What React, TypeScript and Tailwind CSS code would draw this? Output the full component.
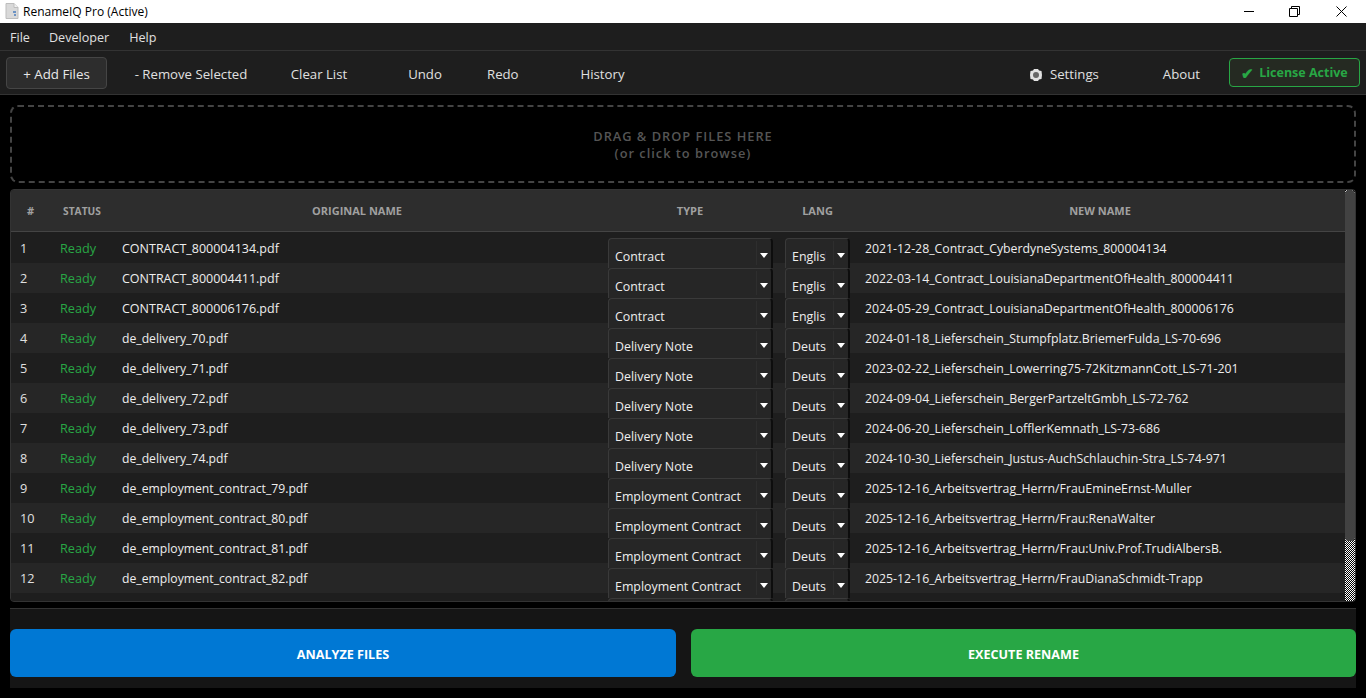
const rows = [
  ["CONTRACT_800004134.pdf", "Contract", "English", "2021-12-28_Contract_CyberdyneSystems_800004134"],
  ["CONTRACT_800004411.pdf", "Contract", "English", "2022-03-14_Contract_LouisianaDepartmentOfHealth_800004411"],
  ["CONTRACT_800006176.pdf", "Contract", "English", "2024-05-29_Contract_LouisianaDepartmentOfHealth_800006176"],
  ["de_delivery_70.pdf", "Delivery Note", "Deutsch", "2024-01-18_Lieferschein_Stumpfplatz.BriemerFulda_LS-70-696"],
  ["de_delivery_71.pdf", "Delivery Note", "Deutsch", "2023-02-22_Lieferschein_Lowerring75-72KitzmannCott_LS-71-201"],
  ["de_delivery_72.pdf", "Delivery Note", "Deutsch", "2024-09-04_Lieferschein_BergerPartzeltGmbh_LS-72-762"],
  ["de_delivery_73.pdf", "Delivery Note", "Deutsch", "2024-06-20_Lieferschein_LofflerKemnath_LS-73-686"],
  ["de_delivery_74.pdf", "Delivery Note", "Deutsch", "2024-10-30_Lieferschein_Justus-AuchSchlauchin-Stra_LS-74-971"],
  ["de_employment_contract_79.pdf", "Employment Contract", "Deutsch", "2025-12-16_Arbeitsvertrag_Herrn/FrauEmineErnst-Muller"],
  ["de_employment_contract_80.pdf", "Employment Contract", "Deutsch", "2025-12-16_Arbeitsvertrag_Herrn/Frau:RenaWalter"],
  ["de_employment_contract_81.pdf", "Employment Contract", "Deutsch", "2025-12-16_Arbeitsvertrag_Herrn/Frau:Univ.Prof.TrudiAlbersB."],
  ["de_employment_contract_82.pdf", "Employment Contract", "Deutsch", "2025-12-16_Arbeitsvertrag_Herrn/FrauDianaSchmidt-Trapp"],
];

const Combo = ({ label, width }: { label: string; width: string }) => (
  <div className={`${width} h-[30px] mt-[5px] flex shrink-0 bg-[#262626] border border-[#3a3a3a] border-r-[#0d0d0d] border-r-2 border-b-0 rounded-t-[4px] overflow-hidden`}>
    <div className="flex-1 min-w-0 ml-[6px] mr-[7px] pt-[9px] text-[12.4px] leading-[18px] text-[#eeeeee] whitespace-nowrap overflow-hidden">{label}</div>
    <div className="w-[15px] h-[24px] mt-[2px] shrink-0 border-l border-[#2e2e2e] flex items-start justify-center pt-[12px]">
      <div className="w-0 h-0 border-x-[4px] border-x-transparent border-t-[5px] border-t-white" />
    </div>
  </div>
);

const ToolButton = ({ label, width }: { label: string; width: string }) => (
  <button className={`${width} h-[32px] pt-[4px] text-[13.2px] text-[#e0e0e0] text-center whitespace-nowrap`}>{label}</button>
);

export default function App() {
  return (
    <div className="w-[1366px] h-[698px] overflow-hidden bg-black flex flex-col font-['Open_Sans',sans-serif] text-[13px]">
      {/* title bar */}
      <div className="h-[23px] bg-white flex items-center shrink-0 pl-[5px]">
        <svg width="14" height="16" viewBox="0 0 14 16" className="mb-[1px]">
          <path d="M1 0.5H9L13 4.5V15.5H1Z" fill="#d9d9d9" stroke="#bdbdbd" />
          <path d="M9 .5V4.5H13" fill="#f2f2f2" stroke="#bdbdbd" />
          <rect x="8" y="8" width="3" height="2" fill="#6c93c4" />
          <rect x="9" y="11" width="2" height="2" fill="#6c93c4" />
        </svg>
        <span className="ml-[4px] text-[12px] text-black">RenameIQ Pro (Active)</span>
        <div className="ml-auto flex items-center h-full pr-[2px]">
          <div className="w-[46px] flex justify-center"><div className="w-[10px] h-px bg-black" /></div>
          <div className="w-[46px] flex justify-center">
            <svg width="11" height="11" viewBox="0 0 11 11" fill="none" stroke="black" className="mr-[2px]">
              <path d="M.5 2.5H8.5V10.5H.5Z" />
              <path d="M2.500 2.500V.5H10.500V8.500H8.500" />
            </svg>
          </div>
          <div className="w-[46px] flex justify-center">
            <svg width="11" height="11" viewBox="0 0 11 11" fill="none" stroke="black"><path d="M.5.5L10.5 10.5M10.5.5L.5 10.500" /></svg>
          </div>
        </div>
      </div>

      {/* menu bar */}
      <div className="h-[28px] pt-[4px] bg-[#1e1e1e] border-b border-[#333333] flex items-center shrink-0 text-[12.6px] text-[#e0e0e0]">
        <span className="ml-[10px]">File</span>
        <span className="ml-[19px]">Developer</span>
        <span className="ml-[20px]">Help</span>
      </div>

      {/* toolbar */}
      <div className="h-[44px] bg-[#1e1e1e] border-b border-[#333333] flex items-center shrink-0 pl-[6px]">
        <button className="w-[101px] h-[32px] pt-[4px] bg-[#2d2d2d] border border-[#454545] rounded-[4px] text-[13.300px] text-[#e8e8e8]">+ Add Files</button>
        <ToolButton label="- Remove Selected" width="w-[168px]" />
        <ToolButton label="Clear List" width="w-[88px]" />
        <ToolButton label="Undo" width="w-[124px]" />
        <ToolButton label="Redo" width="w-[29px]" />
        <ToolButton label="History" width="w-[173px]" />
        <button className="ml-auto h-[32px] pt-[4px] flex items-center text-[13.200px] text-[#e0e0e0]">
          <svg width="14" height="14" viewBox="0 0 14 14" className="mr-[7px]">
            <path d="M5 1H9L10 2.500L12.500 3L13 7L12.500 11L10 11.500L9 13H5L4 11.500L1.500 11L1 7L1.500 3L4 2.500Z" fill="#e2e2e2" />
            <circle cx="7" cy="7" r="3" fill="#666666" />
          </svg>
          Settings
        </button>
        <button className="ml-[64px] h-[32px] pt-[4px] text-[13.200px] text-[#e0e0e0]">About</button>
        <div className="ml-[29px] mr-[6px] w-[131px] h-[29px] pt-[2px] bg-[#252a22] border border-[#28a745] rounded-[4px] flex items-center justify-center font-bold text-[12.500px] text-[#28a745] whitespace-nowrap">
          <span className="text-[15px] leading-[15px] mr-[5px]">✔</span>License Active
        </div>
      </div>

      {/* content */}
      <div className="flex-1 min-h-0 px-[10px] pt-[10px] pb-[10px] flex flex-col">
        <div className="h-[78px] pt-[2px] shrink-0 border-2 border-dashed border-[#444444] rounded-[8px] flex flex-col items-center justify-center text-[#555555] text-[12.8px] font-semibold tracking-[1px] leading-[17px]">
          <span>DRAG &amp; DROP FILES HERE</span>
          <span>(or click to browse)</span>
        </div>

        <div className="mt-[6px] h-[413px] shrink-0 bg-[#1e1e1e] border border-[#333333] rounded-[4px] overflow-hidden flex">
          <div className="flex-1 min-w-0 flex flex-col">
            <div className="h-[42px] pt-[2px] shrink-0 bg-[#2d2d2d] border-b border-[#444444] flex items-center text-[11px] font-bold text-[#a0a0a0] text-center">
              <div className="w-[39px]">#</div>
              <div className="w-[64px] text-[10.200px]">STATUS</div>
              <div className="w-[486px]">ORIGINAL NAME</div>
              <div className="w-[180px]">TYPE</div>
              <div className="w-[75px]">LANG</div>
              <div className="w-[490px]">NEW NAME</div>
            </div>
            <div className="flex-1 min-h-0 overflow-hidden pt-px">
              {rows.map((r, i) => (
                <div key={i} className={`h-[30px] flex ${i % 2 === 0 ? "bg-[#1e1e1e]" : "bg-[#262626]"}`}>
                  <div className="w-[39px] pl-[9px] leading-[30px] text-[12.700px] text-[#e0e0e0]">{i + 1}</div>
                  <div className="w-[64px] pl-[10px] leading-[30px] text-[12.700px] text-[#28a745]">Ready</div>
                  <div className={`w-[486px] pl-[8px] pt-[1px] leading-[30px] ${r[0].startsWith("de_") ? "text-[12.200px]" : "text-[12.500px]"} text-[#eeeeee] whitespace-nowrap`}>{r[0]}</div>
                  <div className="w-[180px] pl-[8px]"><Combo label={r[1]} width="w-[165px]" /></div>
                  <div className="w-[75px] pl-[5px]"><Combo label={r[2]} width="w-[65px]" /></div>
                  <div className="flex-1 pl-[10px] pt-[1px] leading-[30px] text-[12.300px] text-[#eeeeee] whitespace-nowrap">{r[3]}</div>
                </div>
              ))}
              <div className="h-[30px] flex bg-[#1e1e1e]">
                <div className="w-[589px]" />
                <div className="w-[180px] pl-[8px]"><Combo label="" width="w-[165px]" /></div>
                <div className="w-[75px] pl-[5px]"><Combo label="" width="w-[65px]" /></div>
              </div>
            </div>
          </div>
          {/* scrollbar: checker track with rounded thumb */}
          <div className="w-[10px] shrink-0 bg-[repeating-conic-gradient(#fff_0_25%,#000_0_50%)] bg-[length:2px_2px]">
            <div className="h-[351px] bg-[#424242] rounded-[4px]" />
          </div>
        </div>

        {/* footer */}
        <div className="mt-[6px] h-[80px] shrink-0 bg-[#151515] border-t border-[#333333] flex gap-[15px] pt-[20px]">
          <button className="w-[666px] h-[48px] pt-[5px] bg-[#0078d4] rounded-[6px] text-[12.600px] text-white font-bold">ANALYZE FILES</button>
          <button className="flex-1 h-[48px] pt-[5px] bg-[#28a745] rounded-[6px] text-[12.600px] text-white font-bold">EXECUTE RENAME</button>
        </div>
      </div>
    </div>
  );
}
